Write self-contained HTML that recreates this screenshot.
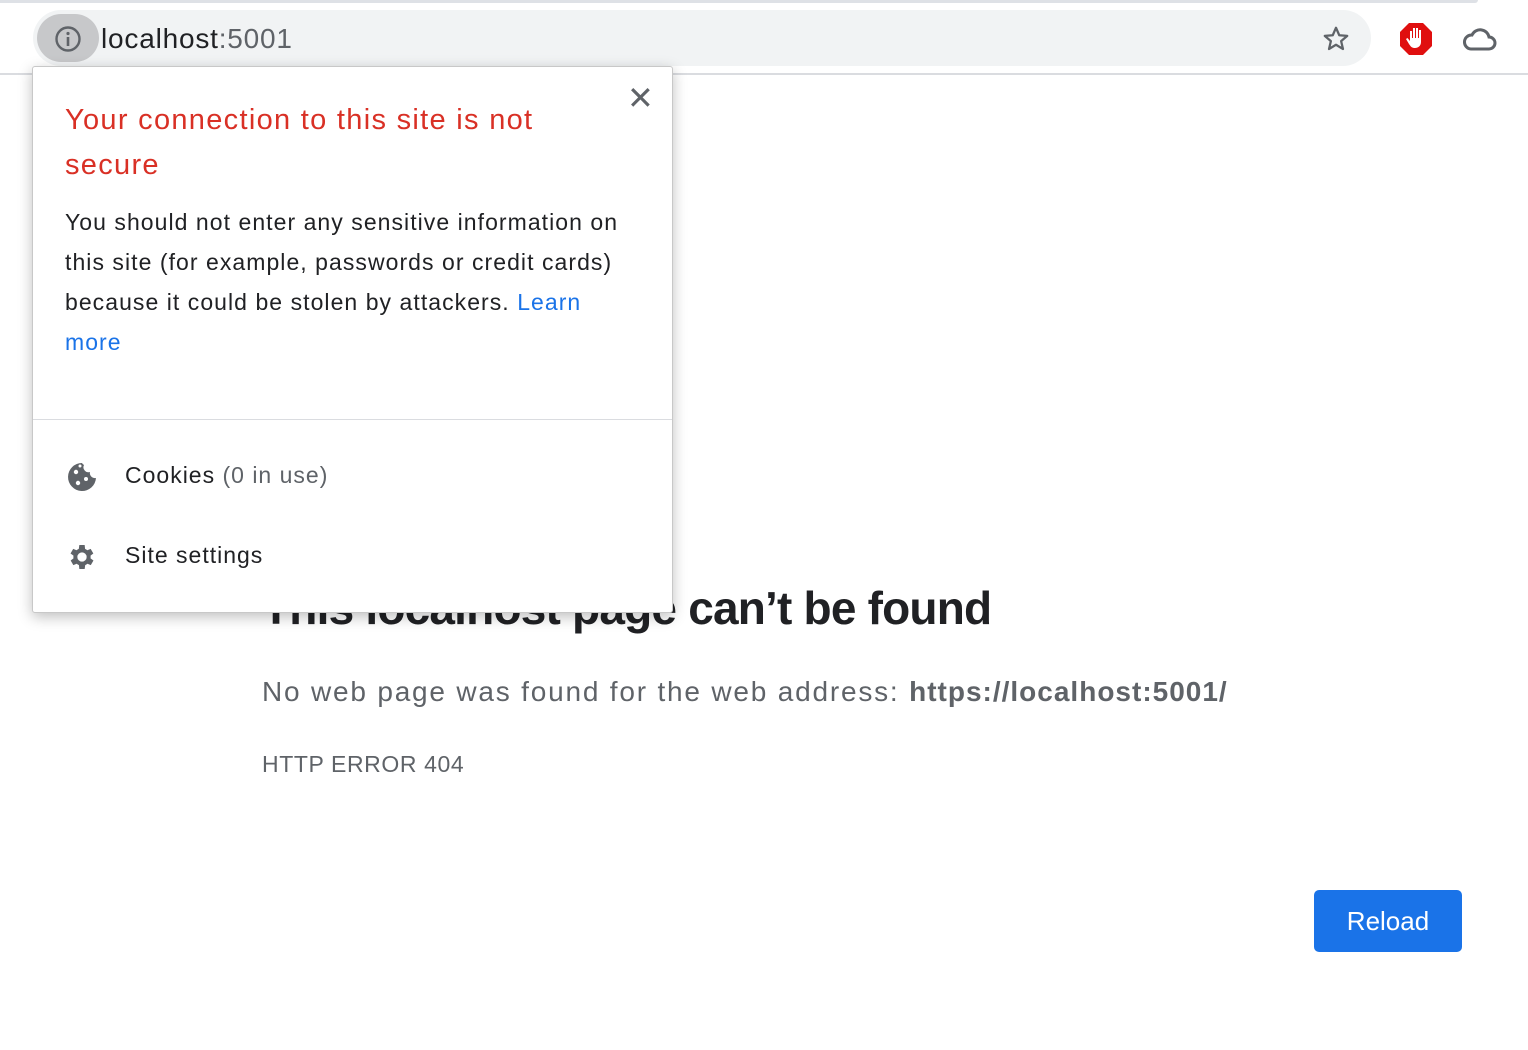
<!DOCTYPE html>
<html><head><meta charset="utf-8"><style>
*{margin:0;padding:0;box-sizing:border-box}
body{width:1528px;height:1050px;background:#fff;font-family:"Liberation Sans",sans-serif;position:relative;overflow:hidden}
.top{position:absolute;left:0;top:0;width:1528px;height:75px;background:#fff;border-bottom:2px solid #dadce0}
.tl{position:absolute;left:0;top:0;width:1478px;height:3px;background:#dee1e6;border-radius:0 0 4px 0}
.bar{position:absolute;left:33px;top:10px;width:1338px;height:56px;background:#f1f3f4;border-radius:28px}
.info{position:absolute;left:37px;top:14px;width:62px;height:48px;background:#c7c8ca;border-radius:24px}
.url{position:absolute;left:101px;top:23px;font-size:28px;color:#202124;letter-spacing:0.8px}
.url span{color:#5f6368}
.h1{position:absolute;left:262px;top:581px;font-size:46px;font-weight:bold;color:#202124;letter-spacing:-0.8px}
.p{position:absolute;left:262px;top:676px;font-size:28px;color:#5f6368;letter-spacing:1.8px}
.p b{color:#5f6368;letter-spacing:1px}
.err{position:absolute;left:262px;top:751px;font-size:23px;color:#5f6368;letter-spacing:0.6px}
.btn{position:absolute;left:1314px;top:890px;width:148px;height:62px;background:#1a73e8;border-radius:5px;color:#fff;font-size:26px;text-align:center;line-height:62px}
.pop{position:absolute;left:32px;top:66px;width:641px;height:547px;background:#fff;border:1px solid #c8c8c8;border-radius:3px;box-shadow:0 4px 14px rgba(0,0,0,.25)}
.t{position:absolute;left:32px;top:31px;font-size:29px;line-height:45px;color:#d93025;white-space:nowrap;letter-spacing:1.3px}
.b{position:absolute;left:32px;top:135px;font-size:23px;line-height:40px;color:#202124;white-space:nowrap;letter-spacing:1.05px}
.b a{color:#1a73e8;text-decoration:none}
.x{position:absolute;left:594px;top:12px;font-size:32px;color:#5f6368}
.hr{position:absolute;left:0;top:352px;width:100%;height:1px;background:#dadce0}
.row{position:absolute;left:92px;font-size:23px;color:#202124;letter-spacing:1px}
.row span{color:#5f6368}
</style></head><body>
<div class="h1">This localhost page can’t be found</div>
<div class="p">No web page was found for the web address: <b>https://localhost:5001/</b></div>
<div class="err">HTTP ERROR 404</div>
<div class="btn">Reload</div>
<div class="top"><div class="tl"></div>
<div class="bar"></div>
<div class="info"></div>
<svg style="position:absolute;left:54px;top:25px" width="28" height="28" viewBox="0 0 28 28"><circle cx="14" cy="14" r="11.5" fill="none" stroke="#5f6368" stroke-width="2.4"/><rect x="12.7" y="12" width="2.6" height="9" fill="#5f6368"/><circle cx="14" cy="8.5" r="1.6" fill="#5f6368"/></svg>
<div class="url">localhost<span>:5001</span></div>
<svg style="position:absolute;left:1321px;top:24px" width="30" height="30" viewBox="0 0 24 24"><path d="M12 3l2.6 6 6.4.5-4.9 4.2 1.5 6.3L12 16.6 6.4 20l1.5-6.3L3 9.5l6.4-.5z" fill="none" stroke="#5f6368" stroke-width="1.8" stroke-linejoin="round"/></svg>
<svg style="position:absolute;left:1399px;top:22px" width="34" height="34" viewBox="0 0 34 34"><polygon points="10,1 24,1 33,10 33,24 24,33 10,33 1,24 1,10" fill="#e00f0f"/><path d="M11 16v-7h2v7h1V6h2v10h1V6h2v10h1V8h2v12c0 4-3 6-6 6s-4-1-6-4l-3-5 1.5-1 2.5 3z" fill="#fff"/></svg>
<svg style="position:absolute;left:1463px;top:25px" width="34" height="28" viewBox="0 0 34 28"><path d="M8 24h18a6 6 0 0 0 0-12 9 9 0 0 0-17-2 7 7 0 0 0-1 14z" fill="none" stroke="#5f6368" stroke-width="3"/></svg>
</div>
<div class="pop">
<div class="t">Your connection to this site is not<br>secure</div>
<div class="x">✕</div>
<div class="b">You should not enter any sensitive information on<br>this site (for example, passwords or credit cards)<br>because it could be stolen by attackers. <a>Learn<br>more</a></div>
<div class="hr"></div>
<svg style="position:absolute;left:33px;top:394px" width="32" height="32" viewBox="0 0 32 32"><path d="M16 2a14 14 0 1 0 14 15 5 5 0 0 1-6-6 5 5 0 0 1-6-7 4 4 0 0 1-2-2z" fill="#5f6368"/><circle cx="10" cy="11" r="2.2" fill="#fff"/><circle cx="12" cy="22" r="2.2" fill="#fff"/><circle cx="20" cy="18" r="2" fill="#fff"/><circle cx="14" cy="5" r="1.5" fill="#fff"/></svg>
<div class="row" style="top:395px">Cookies <span>(0 in use)</span></div>
<svg style="position:absolute;left:33px;top:474px" width="32" height="32" viewBox="0 0 24 24"><path fill="#5f6368" d="M19.4 13a7.5 7.5 0 0 0 0-2l2.1-1.6-2-3.5-2.5 1a7 7 0 0 0-1.7-1L15 3h-4l-.4 2.9a7 7 0 0 0-1.7 1l-2.5-1-2 3.5L6.6 11a7.5 7.5 0 0 0 0 2l-2.1 1.6 2 3.5 2.5-1a7 7 0 0 0 1.7 1L11 21h4l.4-2.9a7 7 0 0 0 1.7-1l2.5 1 2-3.5zM13 15.5a3.5 3.5 0 1 1 0-7 3.5 3.5 0 0 1 0 7z" transform="translate(-1 0)"/></svg>
<div class="row" style="top:475px">Site settings</div>
</div>
</body></html>
